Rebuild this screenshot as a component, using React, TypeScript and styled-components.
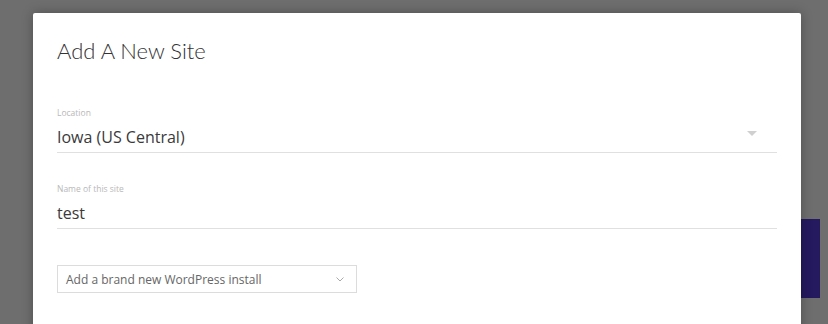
import React from "react";
import styled, { createGlobalStyle } from "styled-components";

const Global = createGlobalStyle`
  html, body { margin: 0; padding: 0; }
  body { background: #6e6e6e; font-family: "Open Sans", "Liberation Sans", sans-serif; overflow: hidden; }
`;

const Page = styled.div`
  position: relative;
  width: 828px;
  height: 324px;
  background: #6e6e6e;
  overflow: hidden;
  padding: 13px 0 0 33px;
  box-sizing: border-box;
`;

const BackdropButton = styled.div`
  position: absolute;
  left: 801px;
  top: 219px;
  width: 19px;
  height: 79px;
  background: #25195f;
`;

const Modal = styled.div`
  position: relative;
  z-index: 1;
  width: 768px;
  height: 340px;
  background: #fff;
  border-radius: 2px;
  box-shadow: 0 0 12px rgba(0, 0, 0, 0.28);
  padding: 24px 24px 0 24px;
  box-sizing: border-box;
  display: flex;
  flex-direction: column;
`;

const Title = styled.h1`
  margin: 0;
  font-family: "Lato", sans-serif;
  font-weight: 300;
  font-size: 22px;
  line-height: 28px;
  color: #333;
`;

const Field = styled.div<{ $top: number }>`
  position: relative;
  margin-top: ${(p) => p.$top}px;
  border-bottom: 1px solid #e0e0e0;
  width: 720px;
`;

const Label = styled.div`
  font-size: 8.5px;
  line-height: 12px;
  color: #b8b8b8;
  padding-top: 2px;
`;

const Value = styled.div`
  font-size: 16px;
  line-height: 22px;
  color: #3a3a3a;
  padding: 7px 0 4px;
`;

const Caret = styled.div`
  position: absolute;
  right: 20px;
  top: 26px;
  width: 0;
  height: 0;
  border-left: 5px solid transparent;
  border-right: 5px solid transparent;
  border-top: 5px solid #d0d0d0;
`;

const Select = styled.div`
  margin-top: 36px;
  width: 300px;
  height: 28px;
  box-sizing: border-box;
  border: 1px solid #dcdcdc;
  display: flex;
  align-items: center;
  justify-content: space-between;
  padding: 0 12px 0 8px;
  font-size: 12px;
  color: #666;
`;

export default function App() {
  return (
    <>
      <Global />
      <Page>
        <BackdropButton />
        <Modal>
          <Title>Add A New Site</Title>
          <Field $top={40}>
            <Label>Location</Label>
            <Value>Iowa (US Central)</Value>
            <Caret />
          </Field>
          <Field $top={28}>
            <Label>Name of this site</Label>
            <Value>test</Value>
          </Field>
          <Select>
            <span>Add a brand new WordPress install</span>
            <svg width="8" height="5" viewBox="0 0 8 5">
              <path d="M0.5 0.5 L4 4 L7.5 0.5" fill="none" stroke="#aaa" strokeWidth="1" />
            </svg>
          </Select>
        </Modal>
      </Page>
    </>
  );
}
